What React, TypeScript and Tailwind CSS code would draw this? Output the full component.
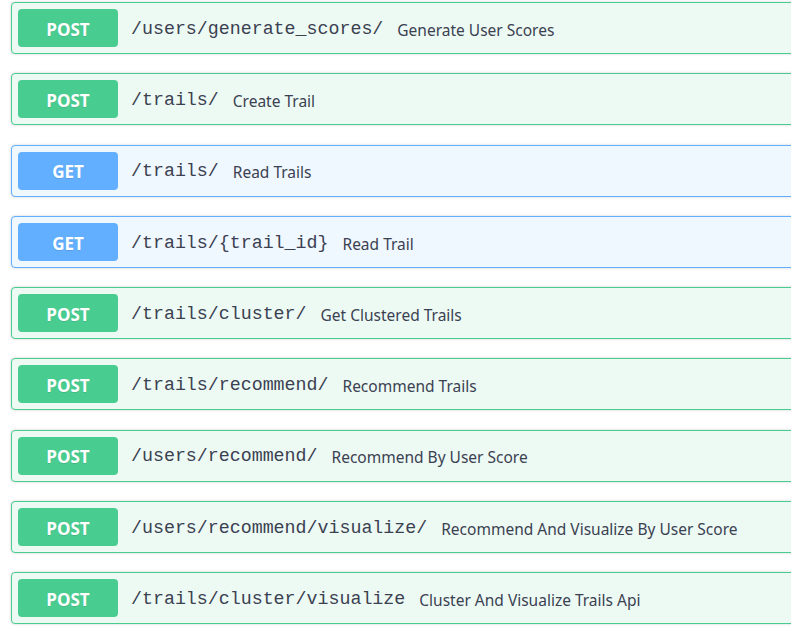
import React from 'react';

type Endpoint = {
  method: 'POST' | 'GET';
  path: string;
  summary: string;
};

const endpoints: Endpoint[] = [
  { method: 'POST', path: '/users/generate_scores/', summary: 'Generate User Scores' },
  { method: 'POST', path: '/trails/', summary: 'Create Trail' },
  { method: 'GET', path: '/trails/', summary: 'Read Trails' },
  { method: 'GET', path: '/trails/{trail_id}', summary: 'Read Trail' },
  { method: 'POST', path: '/trails/cluster/', summary: 'Get Clustered Trails' },
  { method: 'POST', path: '/trails/recommend/', summary: 'Recommend Trails' },
  { method: 'POST', path: '/users/recommend/', summary: 'Recommend By User Score' },
  { method: 'POST', path: '/users/recommend/visualize/', summary: 'Recommend And Visualize By User Score' },
  { method: 'POST', path: '/trails/cluster/visualize', summary: 'Cluster And Visualize Trails Api' },
];

const OpBlock: React.FC<{ op: Endpoint }> = ({ op }) => {
  const isPost = op.method === 'POST';
  return (
    <div
      className={`h-[52px] flex items-center rounded-[4px] border px-[6px] shadow-[0_0_3px_rgba(0,0,0,0.19)] ${
        isPost ? 'border-[#49cc90] bg-[#edfaf4]' : 'border-[#61affe] bg-[#eff7ff]'
      }`}
    >
      <span
        className={`w-[100px] h-[38px] pt-[3px] flex items-center justify-center rounded-[4px] text-white font-bold text-[17px] [text-shadow:0_1px_0_rgba(0,0,0,0.1)] ${
          isPost ? 'bg-[#49cc90]' : 'bg-[#61affe]'
        }`}
        style={{ fontFamily: '"Open Sans", sans-serif' }}
      >
        {op.method}
      </span>
      <span
        className="ml-[13px] mt-[3px] text-[18.3px] text-[#3b4151] whitespace-nowrap"
        style={{ fontFamily: '"Liberation Mono", monospace' }}
      >
        {op.path}
      </span>
      <span
        className="ml-[14px] mt-[5px] text-[15.5px] text-[#3b4151] whitespace-nowrap"
        style={{ fontFamily: '"Noto Sans", sans-serif' }}
      >
        {op.summary}
      </span>
    </div>
  );
};

const App: React.FC = () => {
  return (
    <div className="w-[791px] h-[637px] overflow-hidden bg-white">
      <div className="w-[800px] ml-[11px] pt-[2px] flex flex-col gap-[19.25px]">
        {endpoints.map((op, i) => (
          <OpBlock key={i} op={op} />
        ))}
      </div>
    </div>
  );
};

export default App;
